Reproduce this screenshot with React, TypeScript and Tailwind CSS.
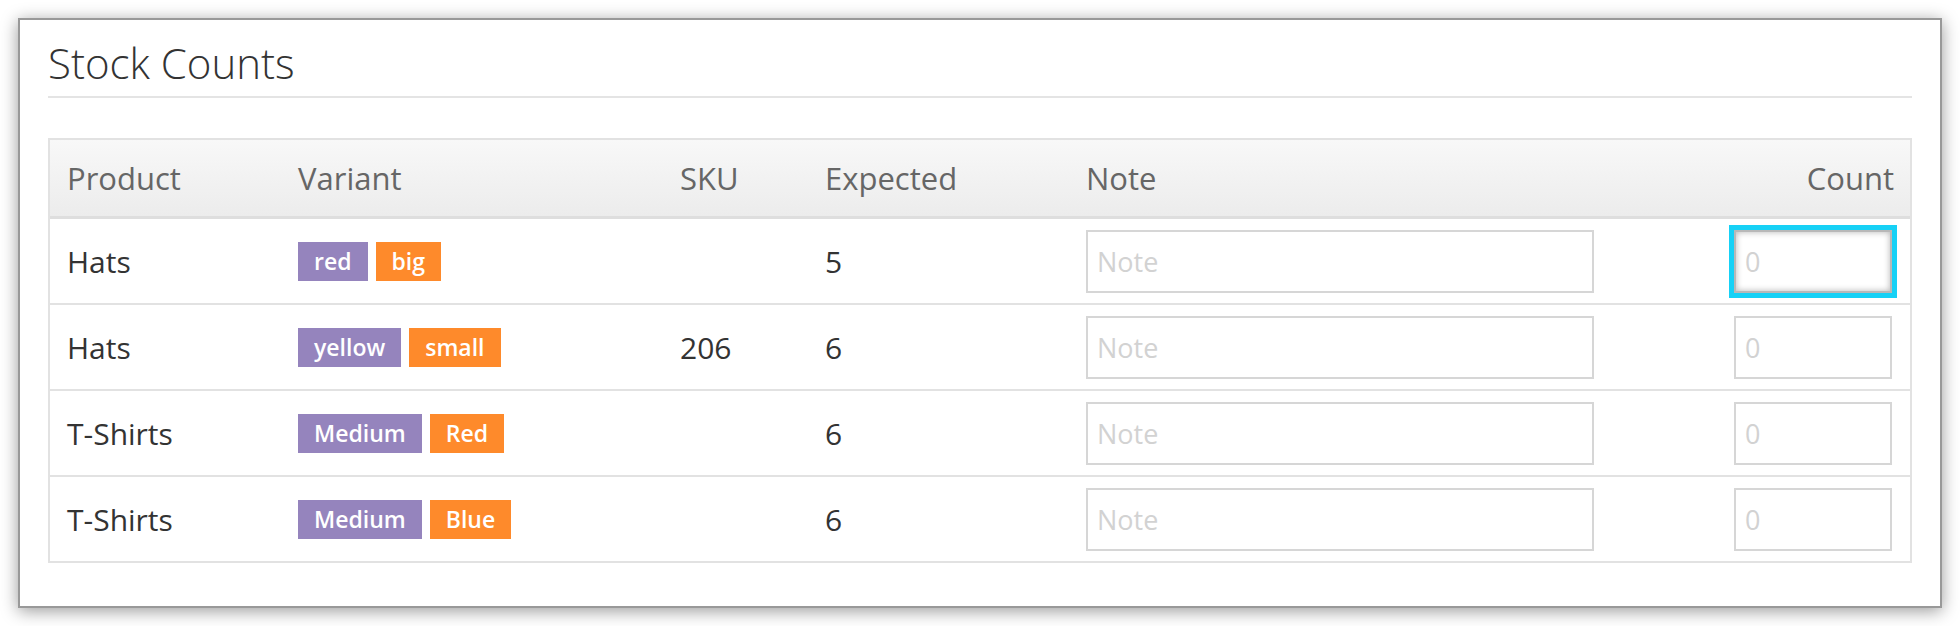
const rows = [
  { product: 'Hats', variants: ['red', 'big'], sku: '', expected: '5', focused: true },
  { product: 'Hats', variants: ['yellow', 'small'], sku: '206', expected: '6', focused: false },
  { product: 'T-Shirts', variants: ['Medium', 'Red'], sku: '', expected: '6', focused: false },
  { product: 'T-Shirts', variants: ['Medium', 'Blue'], sku: '', expected: '6', focused: false },
];

const cols = 'grid grid-cols-[231px_382px_145px_261px_1fr_300px] items-center';

export default function App() {
  return (
    <div className="h-[626px] bg-white p-[18px] font-['Open_Sans',sans-serif]">
      <div className="h-full border-2 border-[#999] bg-white px-[28px] pt-[17px] shadow-[0_3px_16px_rgba(0,0,0,0.4)]">
        <h1 className="border-b-2 border-[#e4e4e4] pb-[7px] text-[42px] leading-[52px] font-light text-[#333]">
          Stock Counts
        </h1>

        <div className="mt-[40px] border-2 border-[#e2e2e2]">
          <div className={`${cols} h-[79px] border-b-[3px] border-[#dedede] bg-gradient-to-b from-[#f8f8f8] to-[#ececec] text-[31px] text-[#666]`}>
            <div className="pl-[17px]">Product</div>
            <div className="pl-[17px]">Variant</div>
            <div className="pl-[17px]">SKU</div>
            <div className="pl-[17px]">Expected</div>
            <div className="pl-[17px]">Note</div>
            <div className="pr-[16px] text-right">Count</div>
          </div>

          {rows.map((r, i) => (
            <div
              key={i}
              className={`${cols} h-[84px] text-[30px] text-[#333] ${i < rows.length - 1 ? 'box-content border-b-2 border-[#e2e2e2]' : ''}`}
            >
              <div className="pl-[17px]">{r.product}</div>
              <div className="flex gap-[8px] pl-[17px]">
                {r.variants.map((v, j) => (
                  <span
                    key={v}
                    className={`flex h-[39px] items-center px-[16px] text-[23px] font-semibold text-white ${j === 0 ? 'bg-[#9584bd]' : 'bg-[#fe8a2b]'}`}
                  >
                    {v}
                  </span>
                ))}
              </div>
              <div className="pl-[17px]">{r.sku}</div>
              <div className="pl-[17px]">{r.expected}</div>
              <div className="pl-[17px]">
                <input
                  placeholder="Note"
                  className="h-[63px] w-[508px] border-2 border-[#d6d6d6] bg-white px-[9px] text-[27px] text-[#333] outline-none placeholder:text-[#d2d2d2]"
                />
              </div>
              <div className="flex justify-end pr-[18px]">
                <input
                  placeholder="0"
                  className={`h-[63px] w-[158px] border-2 bg-white px-[9px] text-[27px] text-[#333] outline-none placeholder:text-[#d2d2d2] ${
                    r.focused
                      ? 'border-[#b8b8b8] shadow-[0_0_0_5px_#16d1f6,inset_0_0_6px_rgba(0,0,0,0.3)]'
                      : 'border-[#d6d6d6]'
                  }`}
                />
              </div>
            </div>
          ))}
        </div>
      </div>
    </div>
  );
}
